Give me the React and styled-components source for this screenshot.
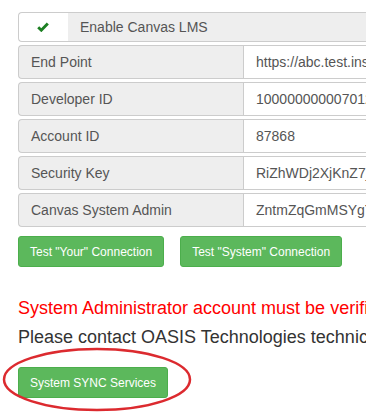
import React from 'react';
import styled, { createGlobalStyle } from 'styled-components';

const GlobalStyle = createGlobalStyle`
  body {
    margin: 0;
    background: #ffffff;
    font-family: "Liberation Sans", Arial, sans-serif;
    overflow: hidden;
  }
`;

const Page = styled.div`
  width: 366px;
  height: 416px;
  overflow: hidden;
  padding: 12px 0 0 18px;
  box-sizing: border-box;
`;

const Form = styled.div`
  width: 600px;
  display: flex;
  flex-direction: column;
  gap: 3px;
`;

const Group = styled.div`
  display: flex;
  height: ${(p) => (p.$short ? '30px' : '34px')};
  font-size: 14px;
  color: #555;
`;

const CheckAddon = styled.div`
  width: 50px;
  box-sizing: border-box;
  display: flex;
  align-items: center;
  justify-content: center;
  padding-right: 2px;
  background: #fff;
  border: 1px solid #ccc;
  border-right: 0;
  border-radius: 4px 0 0 4px;
`;

const Addon = styled.div`
  width: ${(p) => (p.$grow ? 'auto' : '225px')};
  flex: ${(p) => (p.$grow ? '1' : 'none')};
  box-sizing: border-box;
  display: flex;
  align-items: center;
  padding: 0 12px;
  background: #eee;
  border: 1px solid #ccc;
  border-right: 0;
  border-left-width: ${(p) => (p.$grow ? '0' : '1px')};
  border-radius: ${(p) => (p.$grow ? '0' : '4px 0 0 4px')};
`;

const Value = styled.div`
  flex: 1;
  box-sizing: border-box;
  display: flex;
  align-items: center;
  padding: 0 12px;
  background: #fff;
  border: 1px solid #ccc;
  white-space: nowrap;
`;

const ButtonRow = styled.div`
  display: flex;
  gap: 16px;
  margin-top: 9px;
`;

const Button = styled.button`
  height: 31px;
  padding: 0 11px;
  font-family: "Liberation Sans", Arial, sans-serif;
  font-size: 12px;
  color: #fff;
  background: #5cb85c;
  border: 1px solid #4cae4c;
  border-radius: 3px;
  white-space: nowrap;
`;

const Message = styled.div`
  font-size: 18px;
  line-height: 29px;
  white-space: nowrap;
  color: ${(p) => (p.$alert ? '#f00' : '#333')};
`;

const Notice = styled.div`
  margin-top: 27px;
`;

const SyncWrap = styled.div`
  position: relative;
  margin-top: 15px;
  width: max-content;
`;

const Circle = styled.svg`
  position: absolute;
  left: -16px;
  top: -19px;
  pointer-events: none;
  overflow: visible;
`;

const fields = [
  ['End Point', 'https://abc.test.instructure.com'],
  ['Developer ID', '100000000007012'],
  ['Account ID', '87868'],
  ['Security Key', 'RiZhWDj2XjKnZ7jQ8pLm'],
  ['Canvas System Admin', 'ZntmZqGmMSYgTk4rW'],
];

export default function App() {
  return (
    <Page>
      <GlobalStyle />
      <Form>
        <Group $short>
          <CheckAddon>
            <svg width="12" height="10" viewBox="0 0 12 10">
              <path d="M1.2 5.2 L4.3 8.2 L10.8 1.6" fill="none" stroke="#1c7f22" strokeWidth="2.9" />
            </svg>
          </CheckAddon>
          <Addon $grow>Enable Canvas LMS</Addon>
        </Group>
        {fields.map(([label, value]) => (
          <Group key={label}>
            <Addon>{label}</Addon>
            <Value>{value}</Value>
          </Group>
        ))}
      </Form>
      <ButtonRow>
        <Button>Test "Your" Connection</Button>
        <Button>Test "System" Connection</Button>
      </ButtonRow>
      <Notice>
        <Message $alert>System Administrator account must be verified</Message>
        <Message>Please contact OASIS Technologies technical support</Message>
      </Notice>
      <SyncWrap>
        <Button>System SYNC Services</Button>
        <Circle width="190" height="64" viewBox="0 0 190 64">
          <ellipse cx="95" cy="31.5" rx="93" ry="30.5" fill="none" stroke="#dc2a2f" strokeWidth="2.5" />
        </Circle>
      </SyncWrap>
    </Page>
  );
}
